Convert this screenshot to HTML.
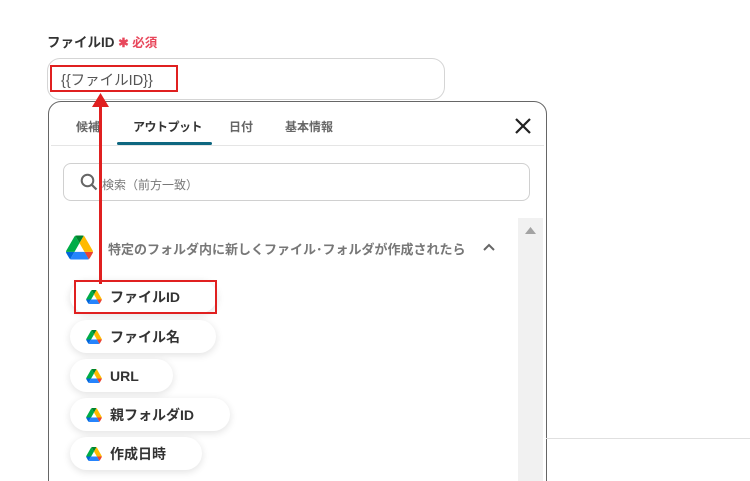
<!DOCTYPE html><html style="height:481px;overflow:hidden"><head><meta charset="utf-8"><style>
body{margin:0;width:750px;height:481px;overflow:hidden;background:#fff;font-family:"Liberation Sans","Noto Sans CJK JP",sans-serif;position:relative}
.a{position:absolute}
.chip{position:absolute;left:70px;height:33px;border-radius:17px;background:#fff;box-shadow:0 2px 8px rgba(0,0,0,.12);font-size:14px;font-weight:bold;color:#333;display:flex;align-items:center;box-sizing:border-box;padding-left:16px}
.chip svg{margin-right:8px}
</style></head><body>
<svg width="0" height="0" style="position:absolute"><defs><symbol id="gd" viewBox="0 0 87.3 78"><path d="M6.6 66.85l3.85 6.65c.8 1.4 1.950 2.5 3.3 3.3L27.5 53H0c0 1.55.4 3.1 1.2 4.5z" fill="#0066da"/><path d="M43.65 25L29.9 1.2c-1.35.8-2.5 1.9-3.3 3.3L1.2 48.5A9 9 0 000 53h27.5z" fill="#00ac47"/><path d="M73.55 76.8c1.35-.8 2.5-1.9 3.3-3.3l1.6-2.750 7.65-13.25c.8-1.4 1.2-2.95 1.2-4.5H59.8l5.85 11.5z" fill="#ea4335"/><path d="M43.65 25L57.4 1.2C56.05.4 54.5 0 52.9 0H34.4c-1.6 0-3.15.45-4.5 1.2z" fill="#00832d"/><path d="M59.8 53H27.5L13.75 76.8c1.35.8 2.9 1.2 4.5 1.2h50.8c1.6 0 3.15-.45 4.5-1.2z" fill="#2684fc"/><path d="M73.4 26.5L60.7 4.5c-.8-1.4-1.95-2.5-3.3-3.3L43.65 25 59.8 53h27.45c0-1.55-.4-3.1-1.2-4.5z" fill="#ffba00"/></symbol></defs></svg>
<div class="a" style="left:47px;top:31px;font-size:13.5px;font-weight:bold;color:#333">ファイルID <span style="color:#e8475b;font-size:12.5px">✱ 必須</span></div>
<div class="a" style="left:47px;top:58px;width:398px;height:42px;border:1px solid #d5d5d5;border-radius:13px;box-sizing:border-box"></div>
<div class="a" style="left:50px;top:65px;width:128px;height:27px;border:2px solid #e02020;box-sizing:border-box"></div>
<div class="a" style="left:61px;top:69px;font-size:14.5px;color:#555">{{ファイルID}}</div>
<div class="a" style="left:48px;top:101px;width:499px;height:400px;border:1px solid #666;border-radius:13px;box-sizing:border-box;background:#fff"></div>
<div class="a" style="left:76px;top:118px;font-size:12px;color:#666;font-weight:bold">候補</div>
<div class="a" style="left:133px;top:118px;font-size:12px;color:#333;font-weight:bold;letter-spacing:-.5px">アウトプット</div>
<div class="a" style="left:229px;top:118px;font-size:12px;color:#666;font-weight:bold">日付</div>
<div class="a" style="left:285px;top:118px;font-size:12px;color:#666;font-weight:bold">基本情報</div>
<div class="a" style="left:117px;top:142px;width:95px;height:3px;background:#0e6780;border-radius:2px"></div>
<div class="a" style="left:51px;top:145px;width:493px;height:1px;background:#e5e5e5"></div>
<svg class="a" style="left:514px;top:117px" width="18" height="18"><path d="M2 2L16 16M16 2L2 16" stroke="#222" stroke-width="2.2"/></svg>
<div class="a" style="left:63px;top:163px;width:467px;height:38px;border:1px solid #d0d0d0;border-radius:8px;box-sizing:border-box"></div>
<svg class="a" style="left:80px;top:173px" width="18" height="18"><circle cx="7.5" cy="7.5" r="5.8" fill="none" stroke="#666" stroke-width="2"/><path d="M12 12L16.5 16.5" stroke="#666" stroke-width="2.2"/></svg>
<div class="a" style="left:102px;top:176px;font-size:12px;color:#777">検索（前方一致）</div>
<div class="a" style="left:518px;top:218px;width:25px;height:263px;background:#f1f1f1"></div>
<svg class="a" style="left:525px;top:227px" width="11" height="7"><path d="M0 7L5.5 0 11 7z" fill="#a3a3a3"/></svg>
<svg class="a" style="left:66px;top:235px" width="27" height="25"><use href="#gd"/></svg>
<div class="a" style="left:108px;top:239px;font-size:13px;font-weight:bold;color:#777;white-space:nowrap">特定のフォルダ内に新しくファイル･フォルダが作成されたら</div>
<svg class="a" style="left:483px;top:243px" width="12" height="8"><path d="M1 7L6 2 11 7" fill="none" stroke="#666" stroke-width="2"/></svg>
<div class="chip" style="top:280px;width:147px"><svg width="16" height="14"><use href="#gd"/></svg>ファイルID</div>
<div class="chip" style="top:320px;width:146px"><svg width="16" height="14"><use href="#gd"/></svg>ファイル名</div>
<div class="chip" style="top:359px;width:103px"><svg width="16" height="14"><use href="#gd"/></svg>URL</div>
<div class="chip" style="top:398px;width:160px"><svg width="16" height="14"><use href="#gd"/></svg>親フォルダID</div>
<div class="chip" style="top:437px;width:132px"><svg width="16" height="14"><use href="#gd"/></svg>作成日時</div>
<div class="a" style="left:74px;top:280px;width:143px;height:34px;border:2px solid #e02020;box-sizing:border-box"></div>
<div class="a" style="left:546px;top:438px;width:204px;height:1px;background:#e0e0e0"></div>
<div class="a" style="left:99px;top:104px;width:2.5px;height:180px;background:#e02020"></div>
<svg class="a" style="left:92px;top:93px" width="17" height="14"><path d="M8.5 0L17 14H0z" fill="#e02020"/></svg>
</body></html>
